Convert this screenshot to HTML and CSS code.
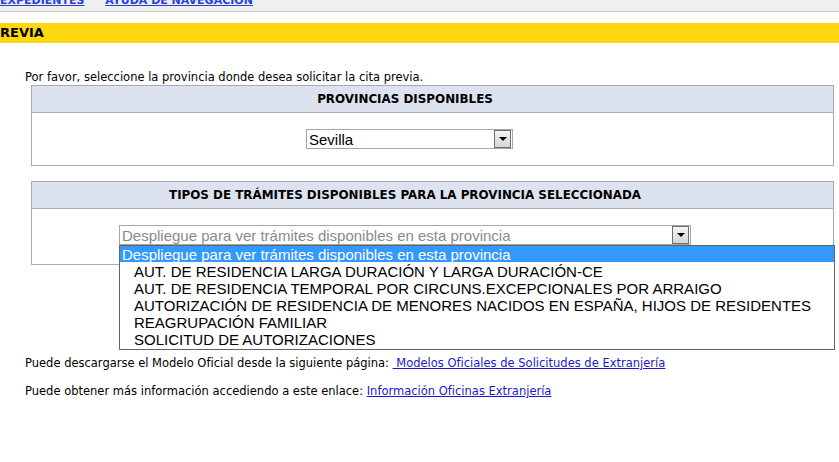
FILE: index.html
```html
<!DOCTYPE html>
<html lang="es">
<head>
    <meta charset="UTF-8">
    <title>Cita previa</title>
    <link rel="stylesheet" href="styles.css">
</head>
<body>
    <div class="topnav">
        <div class="topnav-links">
            <a href="#">EXPEDIENTES</a>
            <a href="#">AYUDA DE NAVEGACIÓN</a>
        </div>
    </div>

    <div class="titlebar">REVIA</div>

    <div class="content">
        <p class="intro">Por favor, seleccione la provincia donde desea solicitar la cita previa.</p>

        <div class="panel">
            <div class="panel-head">PROVINCIAS DISPONIBLES</div>
            <div class="panel-body body-prov">
                <div class="combo combo-prov">
                    <span class="combo-text">Sevilla</span>
                    <span class="combo-btn"><span class="arrow"></span></span>
                </div>
            </div>
        </div>

        <div class="panel">
            <div class="panel-head">TIPOS DE TRÁMITES DISPONIBLES PARA LA PROVINCIA SELECCIONADA</div>
            <div class="panel-body body-tram">
                <div class="combo-wrap">
                    <div class="combo combo-tram">
                        <span class="combo-text placeholder">Despliegue para ver trámites disponibles en esta provincia</span>
                        <span class="combo-btn"><span class="arrow"></span></span>
                    </div>
                    <!-- open dropdown list -->
                    <ul class="listbox">
                        <li class="selected">Despliegue para ver trámites disponibles en esta provincia</li>
                        <li class="opt">AUT. DE RESIDENCIA LARGA DURACIÓN Y LARGA DURACIÓN-CE</li>
                        <li class="opt">AUT. DE RESIDENCIA TEMPORAL POR CIRCUNS.EXCEPCIONALES POR ARRAIGO</li>
                        <li class="opt">AUTORIZACIÓN DE RESIDENCIA DE MENORES NACIDOS EN ESPAÑA, HIJOS DE RESIDENTES</li>
                        <li class="opt">REAGRUPACIÓN FAMILIAR</li>
                        <li class="opt">SOLICITUD DE AUTORIZACIONES</li>
                    </ul>
                </div>
            </div>
        </div>

        <p class="note note-first">Puede descargarse el Modelo Oficial desde la siguiente página: <a href="#">&nbsp;Modelos Oficiales de Solicitudes de Extranjería</a></p>
        <p class="note">Puede obtener más información accediendo a este enlace: <a href="#">Información Oficinas Extranjería</a></p>
    </div>
</body>
</html>
```

FILE: styles.css
```css
body {
    margin: 0;
    padding: 0;
    background-color: #fff;
    font-family: "DejaVu Sans", Verdana, sans-serif;
    font-size: 11.5px;
    color: #000;
}

a { color: #1a1acc; }

.topnav {
    height: 11px;
    overflow: hidden;
    background-color: #efefef;
    border-bottom: 1px solid #c8c8c8;
}

.topnav-links {
    margin-top: -6px;
    line-height: 13px;
    font-size: 11px;
    font-weight: bold;
}

.topnav-links a { color: #2b3fd6; margin-right: 17px; }

.titlebar {
    margin-top: 11px;
    height: 20px;
    line-height: 20px;
    background-color: #fed714;
    font-size: 13px;
    font-weight: bold;
    color: #000;
}

.content { padding: 0 5px 0 25px; }

.intro {
    margin: 28px 0 1px;
    line-height: 13px;
}

.panel {
    margin-left: 6px;
    border: 1px solid #a3abb6;
    margin-bottom: 15px;
}

.panel-head {
    height: 26px;
    line-height: 26px;
    background-color: #dde3ee;
    border-bottom: 1px solid #a3abb6;
    font-size: 11.9px;
    font-weight: bold;
    text-align: center;
    padding-right: 55px;
}

.panel-body { padding-top: 16px; }
.body-prov { height: 36px; padding-left: 274px; }
.body-tram { height: 39px; padding-left: 87px; }

.combo-wrap { position: relative; }

.combo {
    display: flex;
    align-items: center;
    height: 18px;
    border: 1px solid #a5a5a5;
    background-color: #fff;
    font-family: "Liberation Sans", Arial, sans-serif;
    font-size: 15px;
    color: #000;
}

.combo-prov { width: 205px; }
.combo-tram { width: 570px; }

.combo-text { flex: 1; padding-left: 2px; white-space: nowrap; overflow: hidden; }
.placeholder { color: #8a8a8a; }

.combo-btn {
    display: flex;
    align-items: center;
    justify-content: center;
    width: 15px;
    height: 16px;
    margin-right: 1px;
    border: 1px solid #6f6f6f;
    background: linear-gradient(#f4f4f4, #d6d6d6);
}

.arrow {
    width: 0;
    height: 0;
    border-left: 4px solid transparent;
    border-right: 4px solid transparent;
    border-top: 4px solid #000;
}

.listbox {
    position: absolute;
    top: 20px;
    left: 0;
    width: 714px;
    margin: 0;
    padding: 0 0 2px;
    list-style: none;
    border: 1px solid #646464;
    background-color: #fff;
    font-family: "Liberation Sans", Arial, sans-serif;
    font-size: 15px;
    color: #000;
    z-index: 2;
}

.listbox li {
    height: 16px;
    padding-top: 1px;
    line-height: 18px;
    white-space: nowrap;
}

.listbox .selected {
    background-color: #3399ff;
    color: #fff;
    padding-left: 2px;
    padding-top: 0;
    height: 16px;
}

.listbox .opt { padding-left: 14px; }

.note {
    margin: 0 0 15px;
    line-height: 13px;
}

.note-first { margin-top: 92px; }
```
